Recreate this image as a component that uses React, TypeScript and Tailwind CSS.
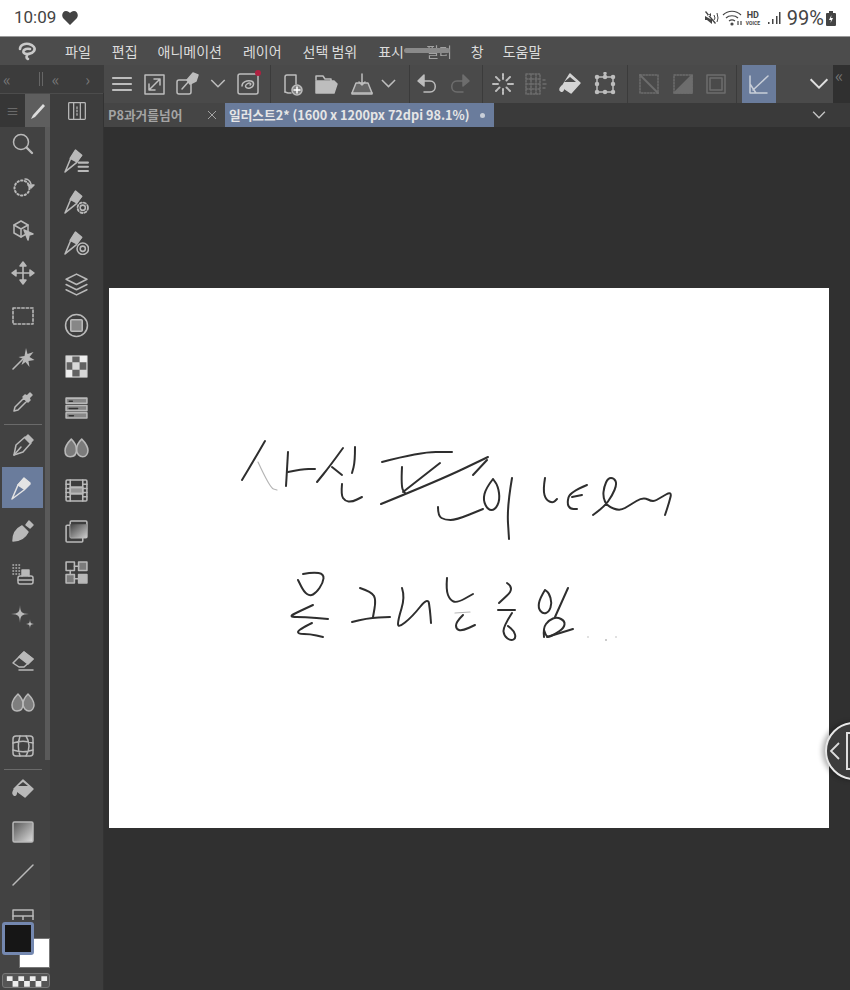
import { ReactNode } from "react";

const kr = { fontFamily: '"Noto Sans CJK KR", "Noto Sans", sans-serif' };

const Ic = ({ children, size = 24 }: { children: ReactNode; size?: number }) => (
  <svg
    width={size}
    height={size}
    viewBox="0 0 24 24"
    fill="none"
    stroke="currentColor"
    strokeWidth={1.5}
    strokeLinecap="round"
    strokeLinejoin="round"
  >
    {children}
  </svg>
);

const Chevron = ({ w = 16 }: { w?: number }) => (
  <svg width={w} height={w * 0.6} viewBox="0 0 16 10" fill="none" stroke="currentColor" strokeWidth={1.6}>
    <path d="M1 1l7 7 7-7" />
  </svg>
);

const nib = "M3 22l2-10 9-8 6 6-8 9z";
const penBody = (
  <>
    <path d="M1 23l6-14 6-6 6 5-6 6z" />
    <path d="M7 9l6-7 6 5-6 6z" fill="currentColor" />
  </>
);

// left tool strip
const tools: { y: ReactNode; active?: boolean }[] = [
  { y: <><circle cx="10" cy="10" r="7.5" /><path d="M15.5 15.5L21 21" strokeWidth={2.4} /></> },
  { y: <><circle cx="11" cy="13" r="7.5" strokeDasharray="1.4 2.4" strokeWidth={2} /><path d="M14 4c3 0 5 2 6 5" /><path d="M17 10h6l-3 3z" fill="currentColor" /></> },
  { y: <><path d="M3 7l7-4 7 4v8l-7 4-7-4z" /><path d="M3 7l7 4 7-4M10 11v8" /><path d="M13 12l9 4-4 1-1 5z" fill="currentColor" /></> },
  { y: <><path d="M12 2v20M2 12h20" strokeWidth={1.6} /><path d="M12 1l3 4H9zM12 23l3-4H9zM1 12l4-3v6zM23 12l-4-3v6z" fill="currentColor" /></> },
  { y: <rect x="2" y="4" width="20" height="16" strokeDasharray="2.4 2" strokeWidth={1.6} /> },
  { y: <><path d="M2 22l10-10" strokeWidth={1.6} /><path d="M15 1l1.500 6 6-2-4 5 5 3-6 1 1 6-4-5-4 3 2-6-5-2 6-1z" fill="currentColor" stroke="none" /></> },
  { y: <><path d="M3 21l1-4 9-9 3 3-9 9z" /><path d="M12 7l5 5 2-2-1-2 3-3-2-2-3 3-2-1z" fill="currentColor" /></> },
  { y: <><path d={nib} /><path d="M3 22l7-8" /><path d="M14 5l3-3 5 5-3 3z" fill="currentColor" /></> },
  { y: penBody, active: true },
  { y: <><path d="M2 22c0-7 3-12 9-15l6 6c-3 6-8 9-15 9z" fill="currentColor" /><path d="M15 6l3-4 4 4-3 3z" fill="currentColor" /></> },
  { y: <><path d="M2 3h.5M5 3h.500M8 3h.5M2 6h.5M5 6h.5M8 6h.5M2 9h.5M5 9h.5M8 9h.5M2 12h.5M5 12h.5M8 12h.5" strokeWidth={1.6} /><rect x="7" y="14" width="15" height="8" rx="2" /><path d="M7 18h15" /><path d="M11 14V8h7v6" fill="currentColor" /></> },
  { y: <path d="M9 0c.4 7 1 8.600 9 9-8 .4-8.600 2-9 9-.4-7-1-8.600-9-9 8-.4 8.600-2 9-9zM19 14c.2 3.500.5 4.600 4 5-3.500.4-3.800 1.500-4 5-.2-3.500-.5-4.600-4-5 3.500-.4 3.800-1.500 4-5z" fill="currentColor" stroke="none" /> },
  { y: <><path d="M2 15l11-11 9 7-9 8H8z" /><path d="M8 9l9 7 5-5-9-7z" fill="currentColor" /><path d="M8 22h14" /></> },
  { y: <><path d="M7 3c3 3 5 6 5 10 0 4-2 7-6 7s-5-3-5-6 3-8 6-11z" fill="currentColor" fillOpacity={0.5} /><path d="M17 3c3 3 6 8 6 11s-2 6-5 6-6-3-6-7c0-4 2-7 5-10z" fill="currentColor" fillOpacity={0.5} /></> },
  { y: <><rect x="2" y="2" width="20" height="20" rx="3" /><path d="M2 9c6-2 14-2 20 0M2 16c6 2 14 2 20 0M9 2c-2 6-2 14 0 20M15 2c4 6 4 14 0 20" /></> },
  { y: <><path d="M12 3l10 9-8 8-11-8z" fill="currentColor" /><path d="M4 12c-2 2-3 5-1 6s3-2 2-5" fill="currentColor" /><path d="M7 9l5-4 5 4z" fill="#424242" stroke="none" /></> },
  { y: <><defs><linearGradient id="g1" x1="0" y1="0" x2="1" y2="1"><stop offset="0" stopColor="#555" /><stop offset="1" stopColor="#ddd" /></linearGradient></defs><rect x="2" y="2" width="20" height="20" rx="1.500" fill="url(#g1)" /></> },
  { y: <path d="M2 22L22 2" /> },
  { y: <><rect x="2" y="4" width="20" height="17" /><path d="M2 10h20M12 10v11" /></> },
];

const penSmall = (
  <>
    <path d="M1 23l5-12 5-8 5 5-4 6z" />
    <path d="M6 10l5-8 6 5-5 6z" fill="currentColor" />
  </>
);

const subTools: ReactNode[] = [
  <>{penSmall}<path d="M14 14h9M14 18h9M14 22h9" strokeWidth={2} /></>,
  <>{penSmall}<circle cx="18" cy="18" r="2.500" /><circle cx="18" cy="18" r="5" strokeDasharray="2 2" strokeWidth={1.800} /></>,
  <>{penSmall}<circle cx="18" cy="18" r="5.500" /><circle cx="18" cy="18" r="2.500" /></>,
  <><path d="M12 2l10 5-10 5-10-5z" /><path d="M2 12l10 5 10-5M2 17l10 5 10-5" /></>,
  <><circle cx="12" cy="12" r="10.500" /><rect x="6.500" y="6.500" width="11" height="11" rx="1" fill="currentColor" fillOpacity={0.6} /></>,
  <><rect x="2" y="2" width="20" height="20" fill="currentColor" fillOpacity={0.3} /><path d="M2 2h6v6H2zM8 8h7v7H8zM15 15h7v7h-7z" fill="#d8d8d8" stroke="none" /><path d="M15 2h7v6h-7zM2 15h6v7H2z" fill="#eee" stroke="none" /></>,
  <><rect x="2" y="3" width="20" height="5" fill="currentColor" fillOpacity={0.6} /><rect x="2" y="10" width="20" height="5" fill="currentColor" fillOpacity={0.6} /><rect x="2" y="17" width="20" height="5" fill="currentColor" fillOpacity={0.6} /><path d="M5 6h3M5 13h8M5 20h4" stroke="#333" /></>,
  <><path d="M7 3c3 3 5 6 5 10 0 4-2 7-6 7s-5-3-5-6 3-8 6-11z" fill="currentColor" fillOpacity={0.5} /><path d="M17 3c3 3 6 8 6 11s-2 6-5 6-6-3-6-7c0-4 2-7 5-10z" fill="currentColor" fillOpacity={0.5} /></>,
  <><rect x="2" y="2" width="20" height="20" rx="1" /><path d="M6 2v20M18 2v20M6 9h12M6 15h12M2 6h4M2 10h4M2 14h4M2 18h4M18 6h4M18 10h4M18 14h4M18 18h4" /><rect x="6" y="9" width="12" height="6" fill="currentColor" fillOpacity={0.7} /></>,
  <><rect x="2" y="6" width="16" height="16" rx="1" /><rect x="6" y="2" width="16" height="16" rx="1" fill="#3d3d3d" /><rect x="6" y="5" width="16" height="13" fill="url(#g2)" stroke="none" /><defs><linearGradient id="g2" x1="1" y1="1" x2="0" y2="0"><stop offset="0" stopColor="#ccc" /><stop offset="1" stopColor="#444" /></linearGradient></defs></>,
  <><rect x="2" y="2" width="8" height="8" /><rect x="14" y="2" width="8" height="8" fill="currentColor" fillOpacity={0.5} /><rect x="2" y="14" width="8" height="8" fill="currentColor" fillOpacity={0.5} /><rect x="14" y="14" width="8" height="8" fill="currentColor" /><path d="M10 6h4M10 18h4M6 10v4" /></>,
];

// handwriting on the canvas, points in page coordinates
const ink: [number, number][][] = [
  [[265, 441], [254, 460], [242, 480]],
  [[288, 452], [287, 470], [286, 486]],
  [[288, 472], [302, 469], [315, 469]],
  [[343, 448], [330, 466], [317, 482]],
  [[332, 467], [342, 475]],
  [[355, 447], [355, 462], [352, 473]],
  [[342, 484], [341, 495], [345, 501], [352, 502], [362, 497]],
  [[382, 462], [420, 452], [452, 452]],
  [[402, 467], [401, 487], [405, 493]],
  [[440, 463], [403, 492]],
  [[381, 504], [440, 480], [488, 457]],
  [[473, 475], [487, 460]],
  [[438, 507], [438, 516], [445, 520], [456, 520], [483, 509]],
  [[493, 479], [486, 488], [483, 500], [488, 510], [495, 510], [500, 500], [498, 486], [493, 479]],
  [[512, 478], [507, 507], [509, 539]],
  [[545, 478], [543, 490], [546, 500], [553, 503], [557, 499]],
  [[587, 485], [570, 492], [567, 503], [570, 509], [577, 509]],
  [[572, 497], [582, 495]],
  [[593, 515], [604, 507], [612, 496], [617, 484], [614, 478], [608, 478], [604, 487], [603, 497], [607, 506], [620, 511], [630, 505], [643, 497], [653, 502], [660, 498], [672, 491], [669, 503], [665, 515]],
  [[303, 574], [313, 572], [324, 574], [323, 583], [316, 593], [310, 596], [304, 592], [298, 580]],
  [[313, 605], [300, 611], [288, 617], [305, 617], [328, 619]],
  [[312, 623], [298, 630], [298, 634], [310, 634], [323, 637]],
  [[360, 588], [372, 592], [376, 600], [373, 617]],
  [[352, 622], [367, 618], [390, 617]],
  [[402, 588], [405, 597], [398, 620], [398, 628], [412, 617], [428, 597], [430, 610], [431, 623]],
  [[447, 578], [446, 590], [450, 600], [457, 603], [473, 594]],
  [[463, 615], [456, 622], [456, 629], [462, 631], [475, 625]],
  [[507, 583], [515, 588], [499, 603]],
  [[498, 610], [515, 610]],
  [[512, 613], [503, 627], [504, 636], [511, 641], [516, 638], [514, 631], [508, 626]],
  [[545, 590], [540, 598], [538, 608], [543, 614], [549, 612], [552, 603], [549, 593], [545, 590]],
  [[568, 588], [555, 617]],
  [[544, 637], [543, 628], [549, 620], [557, 617], [565, 621], [564, 628], [555, 634], [547, 638], [544, 630]],
  [[547, 637], [573, 629]],
];

const faint: [number, number][][] = [
  [[258, 462], [270, 488], [277, 490]],
  [[455, 613], [470, 612]],
];

const smooth = (p: [number, number][]) => {
  let d = `M${p[0][0]} ${p[0][1]}`;
  for (let i = 1; i < p.length - 1; i++) {
    const mx = (p[i][0] + p[i + 1][0]) / 2;
    const my = (p[i][1] + p[i + 1][1]) / 2;
    d += ` Q${p[i][0]} ${p[i][1]} ${mx} ${my}`;
  }
  const l = p[p.length - 1];
  return d + ` L${l[0]} ${l[1]}`;
};

const Bar = ({ className, children }: { className: string; children?: ReactNode }) => (
  <div className={`flex h-full shrink-0 items-center justify-center ${className}`}>{children}</div>
);

const Sep = () => <div className="h-full w-px shrink-0 bg-[#3b3b3b]" />;

export default function App() {
  return (
    <div className="relative h-[990px] w-[850px] overflow-hidden bg-[#303030]" style={kr}>
      {/* status bar */}
      <div className="flex h-[37px] items-center justify-between border-b border-[#9a9a9a] bg-white pl-[14px] pr-[14px] text-[#444]" style={{ fontFamily: "Roboto, sans-serif" }}>
        <div className="flex items-center gap-[6px]">
          <span className="text-[17px]">10:09</span>
          <svg width="16" height="14" viewBox="0 0 16 14"><path d="M8 14L1 7C-1 4 1 0 4 0c2 0 3 1 4 2 1-1 2-2 4-2 3 0 5 4 3 7z" fill="#444" /></svg>
        </div>
        <div className="flex items-center">
          <svg width="15" height="14" viewBox="0 0 15 14" fill="#444"><path d="M1 1l10 12 1-1L2 0zM1 5h2l4-3v3zM1 5v4h2l5 4V9z" /><path d="M10 4l1 3-1 2M13 2l1 5-1 4" stroke="#444" fill="none" /></svg>
          <svg className="ml-[3px]" width="22" height="16" viewBox="0 0 22 16" fill="none" stroke="#444" strokeWidth="1.200"><path d="M1 5c5-5 13-5 18 0M4 8c3-3 9-3 12 0M7 11c2-1.500 4-1.500 6 0" /><circle cx="10" cy="14" r="1" fill="#444" /><path d="M16 11v4M19 15v-4" /></svg>
          <div className="flex w-[18px] flex-col items-center">
            <span className="h-[10px] text-[9px] font-bold leading-[10px]">HD</span>
            <span className="h-[6px] text-[5px] font-bold leading-[6px]">VOICE</span>
          </div>
          <svg className="ml-[6px]" width="13" height="14" viewBox="0 0 13 14" fill="#444"><rect x="0" y="11" width="1.500" height="2" /><rect x="4" y="8" width="1.500" height="5" /><rect x="8" y="5" width="1.500" height="8" /><rect x="11" y="1" width="1.500" height="12" /></svg>
          <span className="ml-[6px] text-[20px] leading-none">99%</span>
          <svg className="ml-[2px]" width="10" height="15" viewBox="0 0 10 15"><path d="M3 0h4v2h2a1 1 0 011 1v11a1 1 0 01-1 1H1a1 1 0 01-1-1V3a1 1 0 011-1h2z" fill="#444" /><path d="M5.500 4L3 9h2l-.5 3L7 7H5z" fill="#fff" /></svg>
        </div>
      </div>

      {/* menu bar */}
      <div className="flex h-[28px] items-center bg-[#4c4c4c] text-[14px] text-[#dcdcdc]">
        <svg className="ml-[17px] w-[22px] text-[#c9c9c9]" height="20" viewBox="0 0 22 20" fill="none" stroke="currentColor" strokeWidth="2.600"><path d="M3 8c0-4 5-6 9-5s7 4 5 7-8 4-10 2 1-5 6-4M11 13c-2 2-2 4 0 5" strokeLinecap="round" /></svg>
        <span className="ml-[26px]">파일</span>
        <span className="ml-[21px]">편집</span>
        <span className="ml-[20px]">애니메이션</span>
        <span className="ml-[21px]">레이어</span>
        <span className="ml-[21px]">선택 범위</span>
        <span className="ml-[21px]">표시</span>
        <span className="ml-[22px] opacity-60">필터</span>
        <span className="ml-[19px]">창</span>
        <span className="ml-[19px]">도움말</span>
      </div>

      <div className="flex h-[925px]">
        {/* tool strips */}
        <div className="flex w-[104px] shrink-0 flex-col bg-[#3d3d3d]">
          <div className="flex h-[28px] items-center bg-[#3c3c3c] pl-[3px] text-[16px] leading-none text-[#777]">
            <span>«</span>
            <span className="ml-[28px] h-[14px] w-[4px] border-x border-[#666]" />
            <span className="ml-[9px]">«</span>
            <span className="ml-[26px]">›</span>
          </div>
          <div className="flex flex-1">
            <div className="relative w-[50px] shrink-0 bg-[#424242]">
              <div className="flex h-[34px] border-t border-[#4c4c4c]">
                <div className="flex w-[25px] items-center justify-center bg-[#363636] text-[13px] text-[#777]">≡</div>
                <div className="flex w-[25px] items-center justify-center bg-[#5e5e5e] text-[#ddd]">
                  <svg width="18" height="18" viewBox="0 0 18 18"><path d="M2 17l2-4L14 2l2 2L6 15z" fill="currentColor" /></svg>
                </div>
              </div>
              <div className="-mt-[5px] flex w-[45px] flex-col text-[#b9b9b9]">
                {tools.map((t, i) =>
                  t.active ? (
                    <div key={i} className="flex h-[43px] items-center">
                      <div className="mx-[2px] flex h-[41px] flex-1 items-center justify-center bg-[#6a7c9c] text-[#e4e4e4]">
                        <Ic>{t.y}</Ic>
                      </div>
                    </div>
                  ) : (
                    <div key={i} className="flex h-[43px] items-center justify-center">
                      <Ic>{t.y}</Ic>
                    </div>
                  ),
                )}
              </div>
              {/* scrollbar */}
              <div className="absolute right-0 top-[34px] h-[633px] w-[5px] bg-[#5a5a5a]" />
              <div className="absolute left-[4px] top-[331px] h-px w-[38px] bg-[#6a6a6a]" />
              <div className="absolute left-[4px] top-[676px] h-px w-[38px] bg-[#6a6a6a]" />
            </div>
            <div className="flex-1 border-r border-[#333] text-[#b9b9b9]">
              <div className="flex h-[34px] items-center justify-center border-t border-[#4c4c4c]">
                <Ic size={20}><rect x="2" y="2" width="20" height="20" rx="1" /><path d="M8 2v20M16 2v20M12 7v2M12 11v2M12 15v2" /></Ic>
              </div>
              <div className="flex flex-col items-center pt-[13px]">
                {subTools.map((s, i) => (
                  <div key={i} className="flex h-[41.200px] items-center justify-center">
                    <Ic size={25}>{s}</Ic>
                  </div>
                ))}
              </div>
            </div>
          </div>
        </div>

        {/* main column */}
        <div className="flex flex-1 flex-col">
          <div className="flex h-[38px]">
            <div className="flex h-full w-[729px] items-center bg-[#4a4a4a] text-[#bdbdbd]">
              <Bar className="w-[35px]"><Ic><path d="M3 6h18M3 12h18M3 18h18" strokeWidth={2.200} /></Ic></Bar>
              <Bar className="w-[32px]"><Ic><rect x="2" y="3" width="19" height="19" /><path d="M6 18L17 7M11 7h6v6M6 12v6h6" /></Ic></Bar>
              <Bar className="w-[32px]"><Ic><rect x="2" y="8" width="14" height="14" rx="2" /><path d="M7 17l8-9" /><path d="M12 8l6-7 5 2-2 6-6 3z" fill="currentColor" /></Ic></Bar>
              <Bar className="w-[30px]"><Chevron /></Bar>
              <Bar className="w-[30px]">
                <div className="relative flex">
                  <Ic><rect x="2" y="2" width="20" height="20" rx="2" /><path d="M6 14c0-4 5-6 9-5s3 6-1 7-6-2-3-4 5 0 3 1" /></Ic>
                  <span className="absolute -right-[1px] -top-[2px] h-[6px] w-[6px] rounded-full bg-[#b02040]" />
                </div>
              </Bar>
              <Bar className="w-[7px]" />
              <Sep />
              <Bar className="ml-[4px] w-[34px]"><Ic><path d="M5 20V5a2 2 0 012-2h9v9" /><path d="M5 20l3 1h3" /><circle cx="17" cy="18" r="5" fill="currentColor" fillOpacity={0.5} /><path d="M17 15v6M14 18h6" stroke="#fff" /></Ic></Bar>
              <Bar className="w-[34px]"><Ic><path d="M2 8V4h7l2 3h6v2" /><path d="M2 21V9h18l3 3-3 9z" fill="currentColor" /></Ic></Bar>
              <Bar className="w-[38px]"><Ic><path d="M2 21l4-10h12l4 10z" fill="currentColor" fillOpacity={0.25} /><path d="M2 21v1h20v-1" /><path d="M12 2v11M9 10l3 3 3-3" /></Ic></Bar>
              <Bar className="w-[15px]"><Chevron /></Bar>
              <Bar className="w-[13px]" />
              <Sep />
              <Bar className="w-[34px]"><Ic><path d="M4 9h11c7 0 7 11 0 11H9" /><path d="M9 3L3 9l6 5z" fill="currentColor" /></Ic></Bar>
              <Bar className="w-[32px] text-[#6d6d6d]"><Ic><path d="M20 9H9c-7 0-7 11 0 11h6" /><path d="M15 3l6 6-6 5z" fill="currentColor" /></Ic></Bar>
              <Bar className="w-[6px]" />
              <Sep />
              <Bar className="ml-[4px] w-[32px]"><Ic><path d="M12 2v5M12 17v5M2 12h5M17 12h5M5 5l3.500 3.500M15.500 15.500L19 19M19 5l-3.500 3.500M8.500 15.500L5 19" strokeDasharray="2 1" strokeWidth={2} /></Ic></Bar>
              <Bar className="w-[34px] text-[#6d6d6d]"><Ic><path d="M2 2h14v20H2zM2 7h14M2 12h14M2 17h14M7 2v20M12 2v20" strokeDasharray="1.500 1.500" /><path d="M19 12h3M19 8h2M19 16h2" /></Ic></Bar>
              <Bar className="w-[34px] text-[#d4d4d4]"><Ic><path d="M12 2l10 9-9 10-9-6z" fill="currentColor" /><path d="M4 14c-2 2-3 4-1 5s3-2 2-4" fill="currentColor" /><path d="M6 10l6-5 6 5z" fill="#4a4a4a" stroke="none" /></Ic></Bar>
              <Bar className="w-[36px]"><Ic><rect x="4" y="5" width="16" height="15" /><circle cx="12" cy="5" r="1.500" fill="currentColor" /><circle cx="12" cy="1.500" r="1" fill="currentColor" /><circle cx="4" cy="12" r="1.500" fill="currentColor" /><circle cx="20" cy="12" r="1.500" fill="currentColor" /><circle cx="4" cy="20" r="1.500" fill="currentColor" /><circle cx="20" cy="20" r="1.500" fill="currentColor" /><circle cx="12" cy="20" r="1.500" fill="currentColor" /><circle cx="4" cy="5" r="1.500" fill="currentColor" /><circle cx="20" cy="5" r="1.500" fill="currentColor" /></Ic></Bar>
              <Bar className="w-[4px]" />
              <Sep />
              <Bar className="ml-[3px] w-[36px] text-[#6d6d6d]"><Ic><rect x="3" y="3" width="18" height="18" strokeDasharray="1.500 1.500" /><path d="M3 3l18 18" strokeWidth={2} /></Ic></Bar>
              <Bar className="w-[32px] text-[#6d6d6d]"><Ic><rect x="3" y="3" width="18" height="18" strokeDasharray="1.500 1.500" /><path d="M21 3v18H3z" fill="currentColor" /></Ic></Bar>
              <Bar className="w-[34px] text-[#6d6d6d]"><Ic><rect x="3" y="3" width="18" height="18" /><rect x="6" y="6" width="12" height="12" /></Ic></Bar>
              <Bar className="w-[3px]" />
              <Sep />
              <Bar className="ml-[5px] w-[34px] bg-[#6a7c9c] text-[#c8ced8]"><Ic><path d="M3 4v17h17M3 12l6 9M6 18L21 4" /></Ic></Bar>
              <Bar className="flex-1 pl-[29px] text-[#e0e0e0]"><Chevron w={20} /></Bar>
            </div>
            <div className="flex-1 pl-[2px] pt-[1px] text-[17px] leading-none text-[#777]">«</div>
          </div>

          <div className="flex h-[24px] items-center bg-[#3a3a3a] text-[12.700px] font-bold">
            <div className="flex h-full w-[121px] items-center justify-between bg-[#454545] pl-[4px] pr-[8px] text-[#a4a4a4]">
              <span>P8과거를넘어</span>
              <svg width="10" height="10" viewBox="0 0 10 10" stroke="currentColor"><path d="M1 1l8 8M9 1l-8 8" /></svg>
            </div>
            <div className="flex h-full w-[269px] items-center bg-[#6a7c9c] pl-[4px] text-[#e6e6e6]">
              <span className="whitespace-nowrap">일러스트2* (1600 x 1200px 72dpi 98.1%)</span>
              <span className="ml-[10px] h-[5px] w-[5px] rounded-full bg-[#c8ced8]" />
            </div>
            <div className="ml-[318px] text-[#c4c4c4]"><Chevron w={14} /></div>
          </div>

          {/* canvas */}
          <div className="flex-1 pl-[5px] pt-[161px]">
            <div className="h-[540px] w-[720px] bg-white">
              <svg width="720" height="540" viewBox="109 288 720 540" fill="none" strokeLinecap="round" strokeLinejoin="round">
                <defs>
                  <filter id="soft"><feGaussianBlur stdDeviation="0.4" /></filter>
                </defs>
                <g stroke="#b5b5b5" strokeWidth="1.200" filter="url(#soft)">
                  {faint.map((p, i) => <path key={i} d={smooth(p)} />)}
                </g>
                <g stroke="#2e2e2e" strokeWidth="2" filter="url(#soft)">
                  {ink.map((p, i) => <path key={i} d={smooth(p)} />)}
                </g>
                <g fill="#bbb">
                  <circle cx="588" cy="637" r="0.800" />
                  <circle cx="606" cy="640" r="1" />
                  <circle cx="616" cy="637" r="0.800" />
                </g>
              </svg>
            </div>
          </div>
        </div>
      </div>

      {/* split-screen handle over the menu */}
      <div className="absolute left-[404px] top-[48px] h-[5px] w-[46px] rounded-full bg-[#8a8a8a]" />

      {/* colour chips */}
      <div className="absolute bottom-0 left-0 h-[70px] w-[50px] bg-[#454545]">
        <div className="absolute left-[19px] top-[18px] h-[30px] w-[31px] border border-[#777] bg-white p-[2px]">
          <div className="h-full w-full bg-white" />
        </div>
        <div className="absolute left-[2px] top-[2px] h-[33px] w-[32px] rounded-[3px] border-[3px] border-[#7488b0] bg-[#161616]" />
        <div className="absolute bottom-[2px] left-[2px] flex h-[15px] w-[48px] flex-wrap overflow-hidden rounded-[3px] border border-[#777] bg-[#555]">
          <svg width="48" height="15" viewBox="0 0 48 15">
            <path d="M4 2h6v5H4zM16 2h6v5h-6zM28 2h6v5h-6zM40 2h6v5h-6zM10 7h6v6h-6zM22 7h6v6h-6zM34 7h6v6h-6z" fill="#eee" />
          </svg>
        </div>
      </div>

      {/* side panel handle */}
      <div className="absolute left-[825px] top-[722px] flex h-[58px] w-[58px] items-center rounded-full border-[2px] border-[#e8e8e8] bg-[#3c3c3c] pl-[2px] shadow-[-3px_0_5px_rgba(0,0,0,0.3)]">
        <svg width="12" height="18" viewBox="0 0 12 18" fill="none" stroke="#ddd" strokeWidth="1.800"><path d="M10 1L2 9l8 8" /></svg>
        <div className="ml-[5px] h-[38px] w-[12px] border-[2px] border-[#ddd]" />
      </div>
    </div>
  );
}
